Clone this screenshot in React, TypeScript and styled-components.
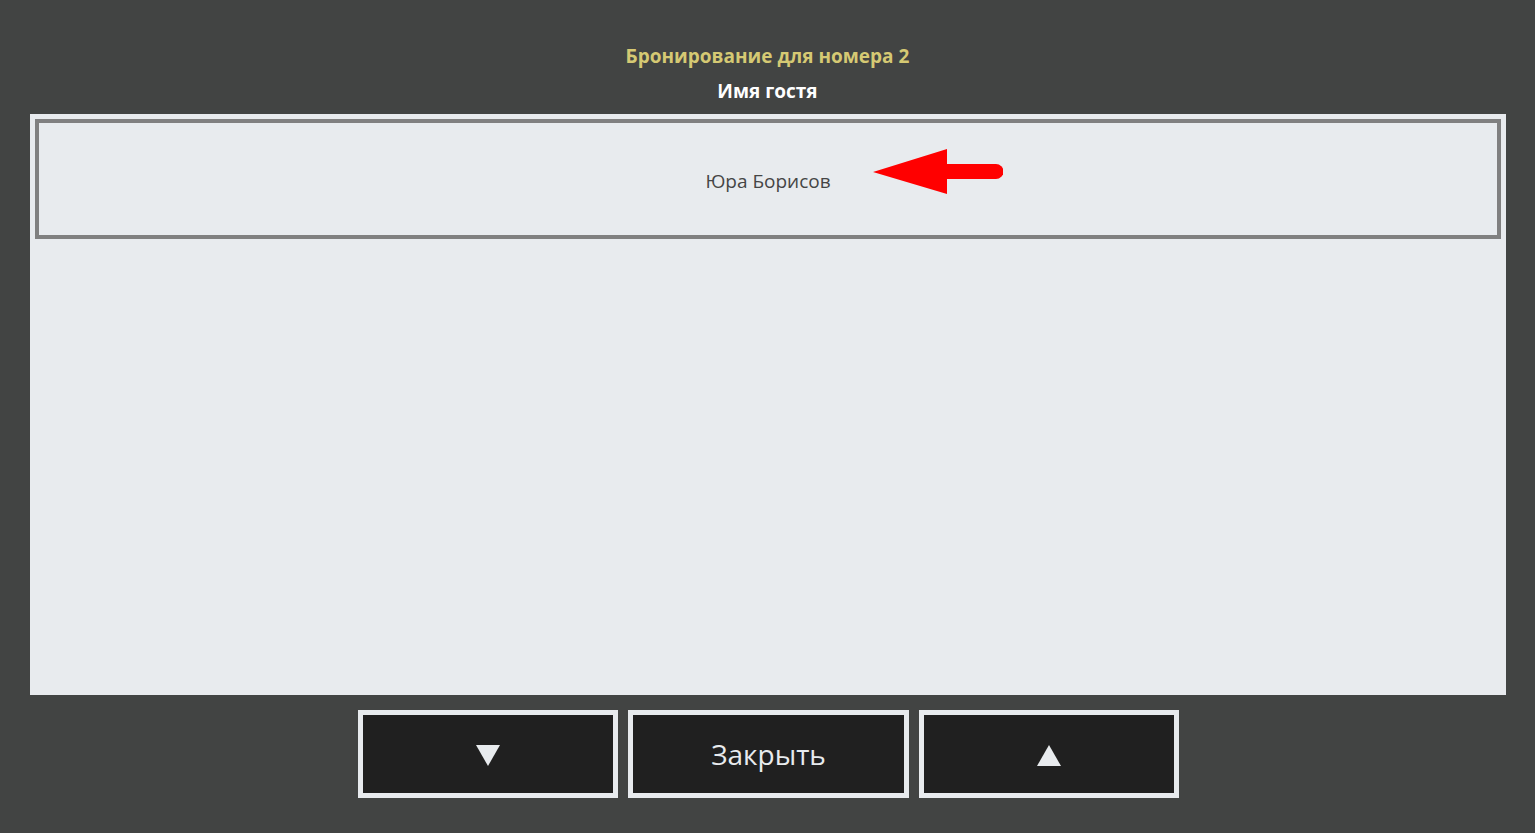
import React from 'react'
import styled, { createGlobalStyle } from 'styled-components'

const GlobalStyle = createGlobalStyle`
  html, body {
    margin: 0;
    padding: 0;
    background: #424443;
  }
  body {
    font-family: "Open Sans", "Noto Sans", "Liberation Sans", sans-serif;
  }
`

const Page = styled.div`
  width: 1535px;
  height: 833px;
  box-sizing: border-box;
  padding-top: 44px;
  background: #424443;
  display: flex;
  flex-direction: column;
  overflow: hidden;
`

const Title = styled.div`
  height: 25px;
  line-height: 25px;
  text-align: center;
  font-size: 19px;
  font-weight: 700;
  color: #d5c973;
`

const Subtitle = styled(Title)`
  margin-top: 10px;
  color: #ffffff;
`

const Panel = styled.div`
  margin: 10px 0 0 30px;
  width: 1476px;
  height: 581px;
  box-sizing: border-box;
  padding: 5px;
  background: #e8ebee;
`

const GuestRow = styled.div`
  position: relative;
  height: 120px;
  box-sizing: border-box;
  border: 4px solid #808080;
  display: flex;
  align-items: center;
  justify-content: center;
  padding-top: 4px;
  font-size: 19px;
  color: #454545;
`

const Pointer = styled.svg`
  position: absolute;
  left: 834px;
  top: 26px;
`

const ButtonRow = styled.div`
  margin-top: 15px;
  display: flex;
  justify-content: center;
  gap: 10px;
  padding-left: 2px;
`

const NavButton = styled.button<{ wide?: boolean }>`
  width: ${({ wide }) => (wide ? '281px' : '260px')};
  height: 88px;
  box-sizing: border-box;
  border: 5px solid #e8ebee;
  background: #202020;
  color: #e8ebee;
  font-family: inherit;
  font-size: 28px;
  display: flex;
  align-items: center;
  justify-content: center;
  padding: 0;
  cursor: pointer;
`

const Triangle = ({ up }: { up?: boolean }) => (
  <svg width="24" height="21" viewBox="0 0 24 21" style={{ marginTop: 3 }}>
    <polygon points={up ? '12,0 24,21 0,21' : '0,0 24,0 12,21'} fill="#e8ebee" />
  </svg>
)

export default function App() {
  return (
    <Page>
      <GlobalStyle />
      <Title>Бронирование для номера 2</Title>
      <Subtitle>Имя гостя</Subtitle>
      <Panel>
        <GuestRow>
          Юра Борисов
          <Pointer width="130" height="45" viewBox="0 0 130 45">
            <polygon points="0,23 74,0 74,15 123,15 123,30 74,30 74,45" fill="#ff0000" />
            <circle cx="123" cy="22.5" r="7.5" fill="#ff0000" />
          </Pointer>
        </GuestRow>
      </Panel>
      <ButtonRow>
        <NavButton>
          <Triangle />
        </NavButton>
        <NavButton wide>Закрыть</NavButton>
        <NavButton>
          <Triangle up />
        </NavButton>
      </ButtonRow>
    </Page>
  )
}
